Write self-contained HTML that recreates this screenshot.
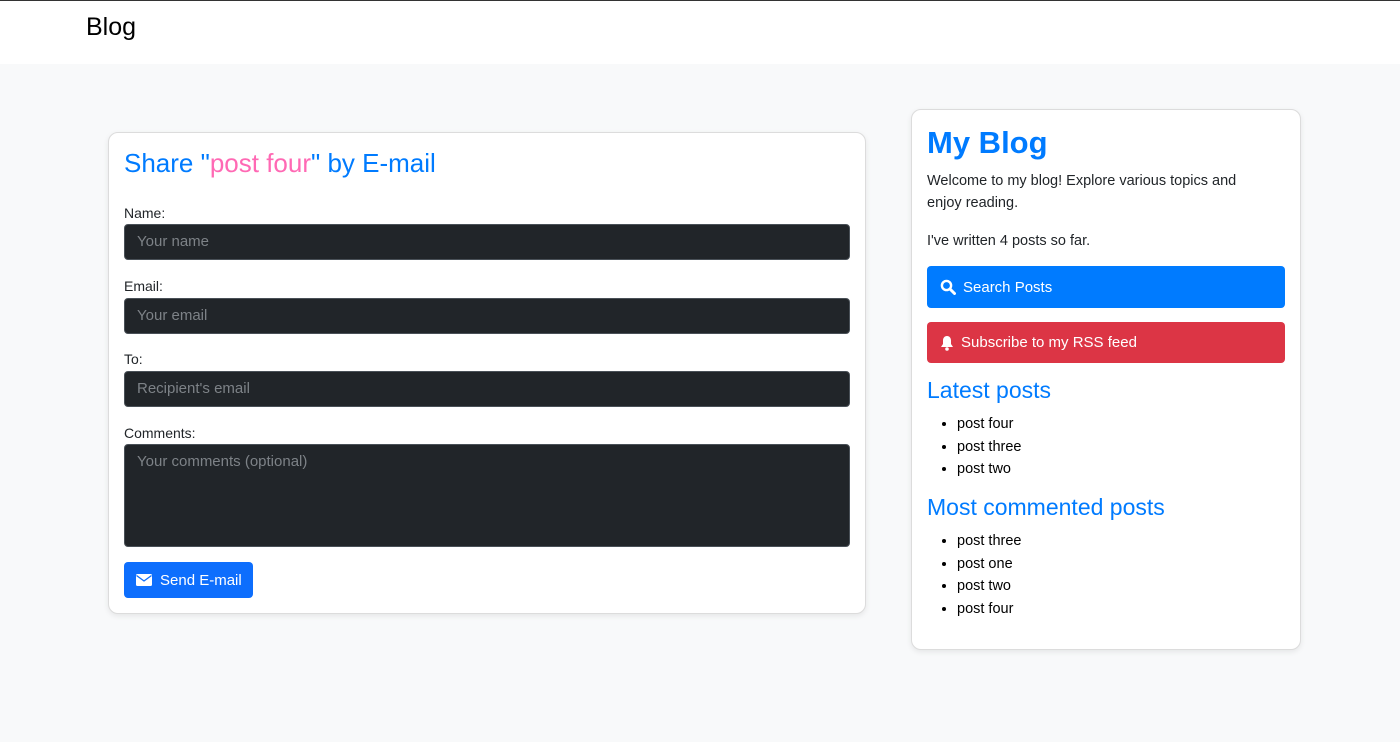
<!DOCTYPE html>
<html><head><meta charset="utf-8"><style>
*{box-sizing:border-box;margin:0;padding:0}
body{width:1400px;height:742px;background:#f8f9fa;font-family:"Liberation Sans",sans-serif;color:#212529;position:relative;overflow:hidden}
.hdr{position:absolute;left:0;top:0;width:1400px;height:64px;background:#fff;border-top:1px solid #333}
.hdr span{position:absolute;left:86px;top:12px;font-size:25px;color:#000}
.card{position:absolute;background:#fff;border:1px solid #dcdcdc;border-radius:10px;box-shadow:0 2px 6px rgba(0,0,0,.08)}
.l{left:108px;top:132px;width:758px;height:482px}
.r{left:911px;top:109px;width:390px;height:541px}
h2{position:absolute;left:15px;top:15px;font-size:26px;font-weight:normal;color:#007bff}
h2 em{font-style:normal;color:#ff69b4}
.lab{position:absolute;left:15px;font-size:14px;color:#212529}
.in{position:absolute;left:15px;width:726px;height:36px;background:#212529;border:1px solid #495057;border-radius:4px;color:#7d8287;font-size:15px;padding:8px 12px}
.btn{position:absolute;border-radius:4px;color:#fff;font-size:15px;display:flex;align-items:center}
h1{position:absolute;left:15px;top:15px;font-size:31px;color:#007bff;font-weight:bold}
p{position:absolute;left:15px;font-size:14.5px;line-height:22px;width:340px}
h3{position:absolute;left:15px;font-size:23px;font-weight:normal;color:#007bff}
ul{position:absolute;left:45px;font-size:14.5px;line-height:22.5px;color:#000}
</style></head><body>
<div class="hdr"><span>Blog</span></div>
<div class="card l">
<h2>Share "<em>post four</em>" by E-mail</h2>
<div class="lab" style="top:72px">Name:</div>
<div class="in" style="top:91px">Your name</div>
<div class="lab" style="top:145px">Email:</div>
<div class="in" style="top:165px">Your email</div>
<div class="lab" style="top:218px">To:</div>
<div class="in" style="top:238px">Recipient's email</div>
<div class="lab" style="top:292px">Comments:</div>
<div class="in" style="top:311px;height:103px">Your comments (optional)</div>
<div class="btn" style="left:15px;top:429px;width:129px;height:36px;background:#0d6efd;padding-left:12px">
<svg width="16" height="12" viewBox="0 0 16 12" style="margin-right:8px"><rect width="16" height="12" rx="1.5" fill="#fff"/><path d="M0.5 1.5L8 7L15.5 1.5" stroke="#0d6efd" stroke-width="1.3" fill="none"/></svg>Send E-mail</div>
</div>
<div class="card r">
<h1>My Blog</h1>
<p style="top:60px">Welcome to my blog! Explore various topics and enjoy reading.</p>
<p style="top:120px">I've written 4 posts so far.</p>
<div class="btn" style="left:15px;top:156px;width:358px;height:42px;background:#007bff;padding-left:13px">
<svg width="16" height="16" viewBox="0 0 16 16" style="margin-right:7px"><circle cx="6.5" cy="6.5" r="4.6" stroke="#fff" stroke-width="2.4" fill="none"/><path d="M10 10L14.5 14.5" stroke="#fff" stroke-width="3" stroke-linecap="round"/></svg>Search Posts</div>
<div class="btn" style="left:15px;top:212px;width:358px;height:41px;background:#dc3545;padding-left:13px">
<svg width="14" height="16" viewBox="0 0 14 16" style="margin-right:7px"><path d="M7 1C4.5 1 3 3 3 5.5V9L1 12H13L11 9V5.5C11 3 9.5 1 7 1Z" fill="#fff"/><circle cx="7" cy="14" r="1.8" fill="#fff"/></svg>Subscribe to my RSS feed</div>
<h3 style="top:267px">Latest posts</h3>
<ul style="top:303px"><li>post four</li><li>post three</li><li>post two</li></ul>
<h3 style="top:384px">Most commented posts</h3>
<ul style="top:420px"><li>post three</li><li>post one</li><li>post two</li><li>post four</li></ul>
</div>
</body></html>
